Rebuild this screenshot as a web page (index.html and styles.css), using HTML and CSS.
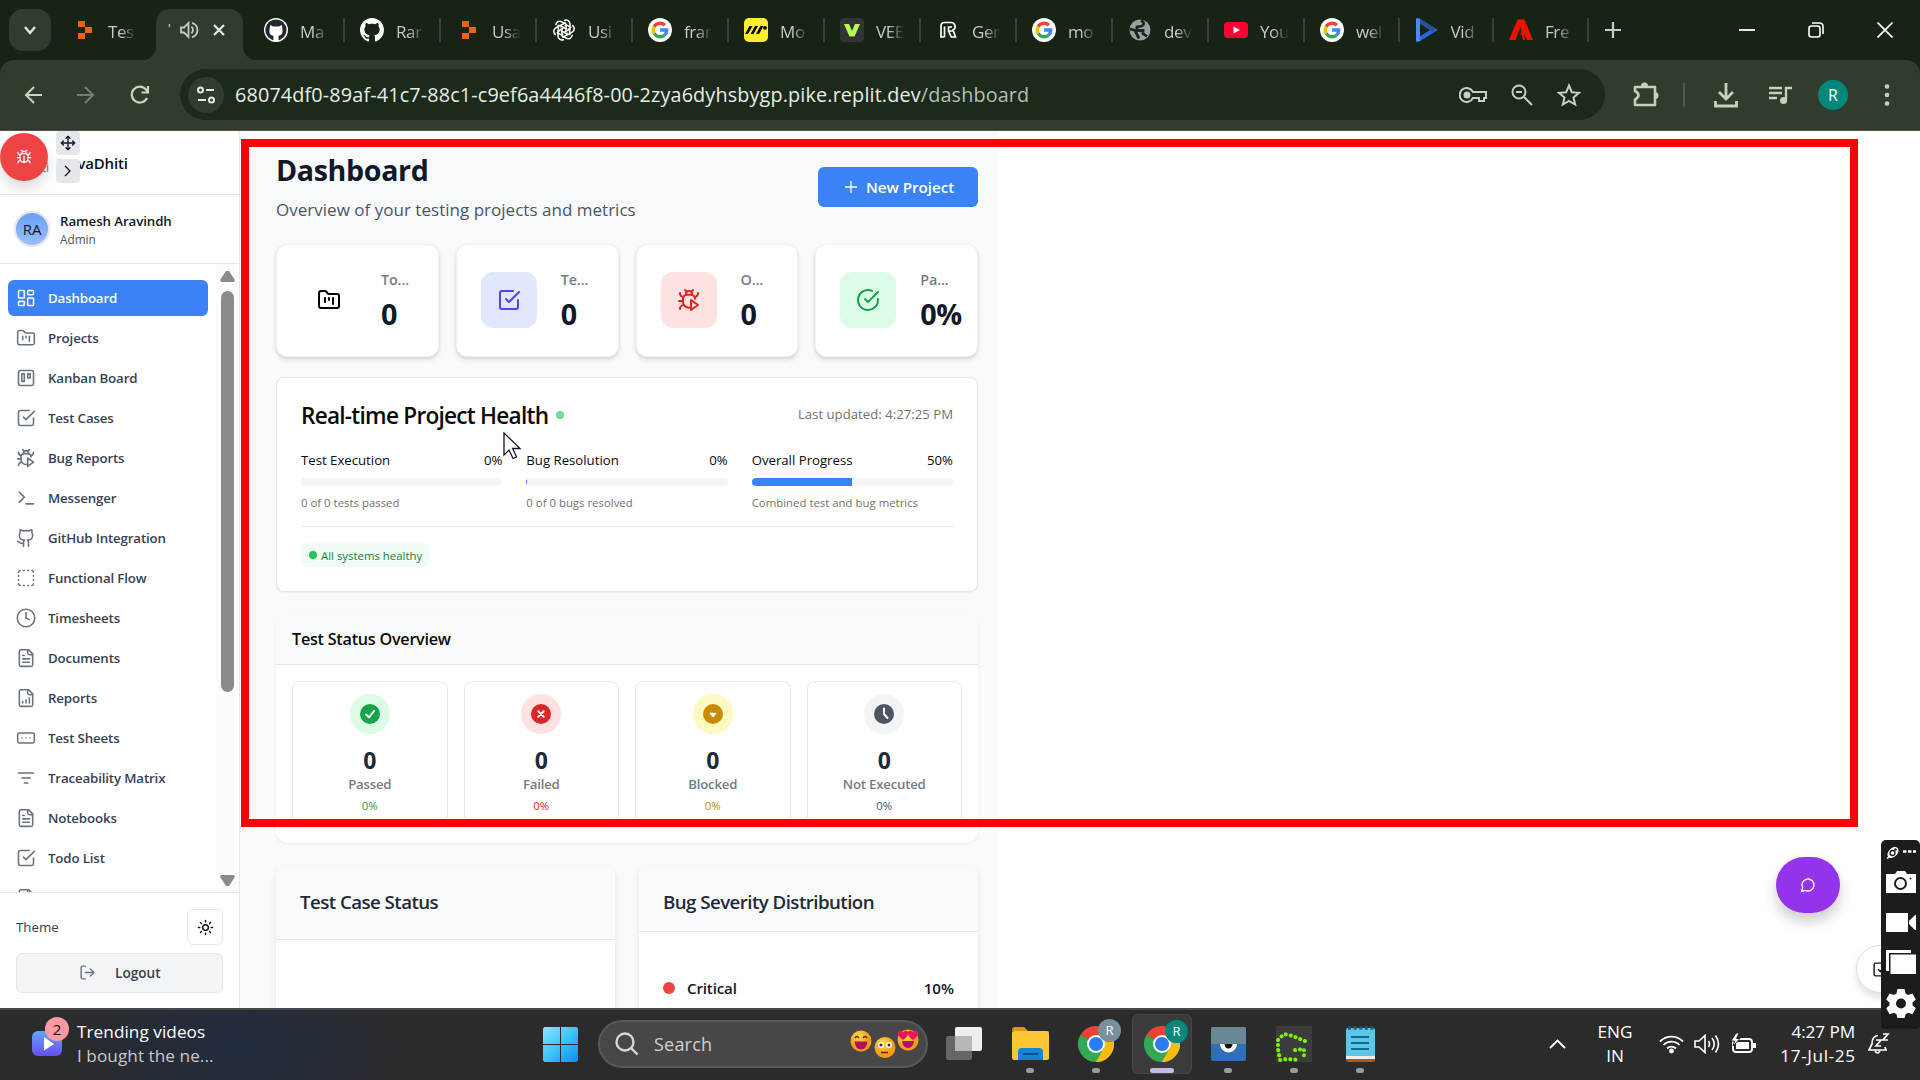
FILE: index.html
```html
<!DOCTYPE html>
<html lang="en">
<head>
<meta charset="utf-8">
<title>Dashboard</title>
<link rel="stylesheet" href="styles.css">
</head>
<body>
<svg class="defs" width="0" height="0">
  <symbol id="replit" viewBox="0 0 24 24"><path fill="#f26207" d="M6 3h7v6H6zM13 9h7v6h-7zM6 15h7v6H6z"/></symbol>
  <symbol id="google" viewBox="0 0 24 24"><circle cx="12" cy="12" r="12" fill="#fff"/><g fill="none" stroke-width="3.3"><path stroke="#ea4335" d="M6.2 8.6A6.8 6.8 0 0 1 16.8 7.2"/><path stroke="#fbbc05" d="M6.2 15.4a6.8 6.8 0 0 1 0-6.8"/><path stroke="#34a853" d="M16.4 17.2A6.8 6.8 0 0 1 6.2 15.4"/><path stroke="#4285f4" d="M12 12h6.8a6.8 6.8 0 0 1-2.4 5.2"/></g></symbol>
  <symbol id="github" viewBox="0 0 16 16"><path d="M8 0C3.58 0 0 3.58 0 8c0 3.54 2.29 6.53 5.47 7.59.4.07.55-.17.55-.38 0-.19-.01-.82-.01-1.49-2.01.37-2.53-.49-2.69-.94-.09-.23-.48-.94-.82-1.13-.28-.15-.68-.52-.01-.53.63-.01 1.08.58 1.23.82.72 1.21 1.87.87 2.33.66.07-.52.28-.87.51-1.07-1.78-.2-3.64-.89-3.64-3.95 0-.87.31-1.59.82-2.15-.08-.2-.36-1.02.08-2.12 0 0 .67-.21 2.2.82.64-.18 1.32-.27 2-.27s1.36.09 2 .27c1.53-1.04 2.2-.82 2.2-.82.44 1.1.16 1.92.08 2.12.51.56.82 1.27.82 2.15 0 3.07-1.87 3.75-3.65 3.95.29.25.54.73.54 1.48 0 1.07-.01 1.93-.01 2.2 0 .21.15.46.55.38A8.01 8.01 0 0 0 16 8c0-4.42-3.58-8-8-8z"/></symbol>
  <symbol id="folder" viewBox="0 0 24 24"><path d="M4 20h16a2 2 0 0 0 2-2V8a2 2 0 0 0-2-2h-7.93a2 2 0 0 1-1.66-.9l-.82-1.2A2 2 0 0 0 7.93 3H4a2 2 0 0 0-2 2v13c0 1.1.9 2 2 2Z"/><path d="M8 10v4M12 10v2M16 10v6"/></symbol>
  <symbol id="check-sq" viewBox="0 0 24 24"><path d="m9 11 3 3L22 4"/><path d="M21 12v7a2 2 0 0 1-2 2H5a2 2 0 0 1-2-2V5a2 2 0 0 1 2-2h11"/></symbol>
  <symbol id="bug-play" viewBox="0 0 24 24"><path d="M12.8 19.6c-.3.1-.5.1-.8.1-3.3 0-6-2.7-6-6v-3a4 4 0 0 1 4-4h4a4 4 0 0 1 4 4"/><path d="m14.1 3.9 1.9-1.9M8 2l1.9 1.9M9 7.1v-1a3 3 0 1 1 6 0v1M6.5 9C4.6 8.8 3 7.1 3 5M6 13H2M3 21c0-2.1 1.7-3.9 3.8-4M21 5c0 2.1-1.6 3.8-3.5 4"/><path d="m14 12 7 5-7 5v-10Z"/></symbol>
  <symbol id="bug" viewBox="0 0 24 24"><path d="m8 2 1.9 1.9M14.1 3.9 16 2M9 7.1v-1a3 3 0 1 1 6 0v1M12 20c-3.3 0-6-2.7-6-6v-3a4 4 0 0 1 4-4h4a4 4 0 0 1 4 4v3c0 3.3-2.7 6-6 6M12 20v-9M6.5 9C4.6 8.8 3 7.1 3 5M6 13H2M3 21c0-2.1 1.7-3.9 3.8-4M21 5c0 2.1-1.6 3.8-3.5 4M22 13h-4M17.2 17c2.1.1 3.8 1.9 3.8 4"/></symbol>
  <symbol id="doc" viewBox="0 0 24 24"><path d="M15 2H6a2 2 0 0 0-2 2v16a2 2 0 0 0 2 2h12a2 2 0 0 0 2-2V7Z"/><path d="M14 2v4a2 2 0 0 0 2 2h4M10 9H8M16 13H8M16 17H8"/></symbol>
  <symbol id="chrome" viewBox="0 0 36 36"><path fill="#ea4335" d="M18 18 2.4 9A18 18 0 0 1 33.6 9z"/><path fill="#fbbc05" d="M18 18V9h15.6A18 18 0 0 1 18 36z"/><path fill="#34a853" d="M2.4 9A18 18 0 0 0 18 36l7.8-13.5L18 18z"/><path fill="#34a853" d="M2.4 9l7.8 13.5L18 18z"/><path fill="#fbbc05" d="M18 36l7.8-13.5L26 9.500h7.8A18 18 0 0 1 18 36z"/><circle cx="18" cy="18" r="9" fill="#fff"/><circle cx="18" cy="18" r="7" fill="#2b7cf0"/></symbol>
</svg>

<header class="browser">
  <div class="tabstrip">
    <div class="tab-search"><svg width="16" height="16" viewBox="0 0 16 16"><path d="m3 5 5 6 5-6" fill="none" stroke="#dfe8dc" stroke-width="2.4"/></svg></div>
    <div class="tab first"><svg class="fav"><use href="#replit"/></svg><span>Tes</span></div>
    <div class="tab-active">
      <i>'</i>
      <svg width="19" height="18" viewBox="0 0 19 18" fill="none" stroke="#c3ccbf" stroke-width="1.8"><path d="M1 6.500h3L8.500 2v14L4 11.500H1z"/><path d="M11.500 5.500q3 3.500 0 7M12 1.800a7.500 7.500 0 0 1 0 14.400"/></svg>
      <svg class="close" width="12" height="12" viewBox="0 0 12 12"><path d="m1 1 10 10M11 1 1 11" stroke="#e6ede3" stroke-width="2.200"/></svg>
    </div>
    <div class="tab"><svg class="fav" viewBox="0 0 24 24"><circle cx="12" cy="12" r="12" fill="#fff"/><circle cx="12" cy="12" r="10.600" fill="#24292f"/><g transform="translate(-.8 0)"><path fill="#fff" d="M7 7l3 1.400h5.600l3-1.400.6 4.200c1 5-2 6.200-4 6.600l.4 5.600h-5.400V17.800C7.500 17.400 5.500 15.500 6.400 11z"/></g></svg><span>Ma</span></div>
    <div class="tab"><svg class="fav" fill="#fff"><use href="#github"/></svg><span>Rar</span></div>
    <div class="tab"><svg class="fav"><use href="#replit"/></svg><span>Usa</span></div>
    <div class="tab"><svg class="fav" viewBox="0 0 24 24" fill="none" stroke="#fff" stroke-width="1.500"><g id="pet"><path d="M12 2.500c3-1.500 6 .5 6 3.500v5l-6 3.400"/><path d="M9 9.500V7.200l4.700-2.700"/></g><use href="#pet" transform="rotate(60 12 12)"/><use href="#pet" transform="rotate(120 12 12)"/><use href="#pet" transform="rotate(180 12 12)"/><use href="#pet" transform="rotate(240 12 12)"/><use href="#pet" transform="rotate(300 12 12)"/></svg><span>Usi</span></div>
    <div class="tab"><svg class="fav"><use href="#google"/></svg><span>frar</span></div>
    <div class="tab"><svg class="fav" viewBox="0 0 24 24"><rect width="24" height="24" rx="5" fill="#ffee2e"/><path d="M1 16 5.500 8h3L4 16zM6.500 16 11 8h3l-4.500 8zM12 16l4.500-8h3L15 16z"/><circle cx="21" cy="9.800" r="1.900"/></svg><span>Mo</span></div>
    <div class="tab"><svg class="fav" viewBox="0 0 24 24"><rect width="24" height="24" rx="4" fill="#333"/><path fill="#b6ff52" d="M4 6h5l3 7 3-7h5l-5.500 12.500h-5z"/></svg><span>VEE</span></div>
    <div class="tab"><svg class="fav" viewBox="0 0 24 24" fill="none" stroke="#fff" stroke-width="1.700"><path d="M8.500 19H5V8q0-3.500 3.500-3.500H15a4 4 0 0 1 2 7.500l2.500 7h-4.200L12.500 13V9H16M8.500 8.500V19M12.500 13H17"/></svg><span>Ger</span></div>
    <div class="tab"><svg class="fav"><use href="#google"/></svg><span>mo</span></div>
    <div class="tab"><svg class="fav" viewBox="0 0 24 24"><circle cx="12" cy="12" r="10.500" fill="#9aa0a6"/><path fill="none" stroke="#1a2719" stroke-width="2.800" d="M13 2.500q5 3 1 5.500l-5 1v3.500h6v3l4 3M2 11l5 1.500 4 8"/></svg><span>dev</span></div>
    <div class="tab"><svg class="fav" viewBox="0 0 24 24"><rect y="4" width="24" height="16" rx="4" fill="#ff0033"/><path fill="#fff" d="m9.500 8.500 6.500 3.500-6.500 3.500z"/></svg><span>You</span></div>
    <div class="tab t94"><svg class="fav"><use href="#google"/></svg><span>wel</span></div>
    <div class="tab t94"><svg class="fav" viewBox="0 0 24 24"><path d="m3 2 16 10L3 22z" fill="none" stroke="#2467e8" stroke-width="4"/><path d="m3 2 16 10" stroke="#2c5292" stroke-width="4"/><path d="M3 1v22" stroke="#4b8bff" stroke-width="4"/></svg><span>Vid</span></div>
    <div class="tab t94"><svg class="fav" viewBox="0 0 24 24"><path fill="#eb1000" d="M8.500 1.500h7L24 22h-6.200l-2.200-5.500h-4.300L14 9.800 16 22h-2L11.500 9 6.500 22H0z"/></svg><span>Fre</span></div>
    <svg class="newtab" width="18" height="18" viewBox="0 0 18 18"><path d="M9 1v16M1 9h16" stroke="#c3d1bd" stroke-width="2.200"/></svg>
    <div class="win">
      <svg width="16" height="16" viewBox="0 0 16 16"><path d="M0 8h16" stroke="#fff" stroke-width="1.800"/></svg>
      <svg width="16" height="16" viewBox="0 0 16 16" fill="none" stroke="#fff" stroke-width="1.600"><rect x="1" y="4" width="11" height="11" rx="2.500"/><path d="M4 1h7.500Q15 1 15 4.500V12"/></svg>
      <svg width="16" height="16" viewBox="0 0 16 16"><path d="m.5.5 15 15M15.500.5l-15 15" stroke="#fff" stroke-width="1.700"/></svg>
    </div>
  </div>
  <div class="toolbar">
    <div class="nav">
      <svg width="18" height="18" viewBox="0 0 18 18"><path d="M18 9H2M10 1 2 9l8 8" fill="none" stroke="#c3d9ba" stroke-width="2"/></svg>
      <svg width="18" height="18" viewBox="0 0 18 18"><path d="M0 9h16M8 1l8 8-8 8" fill="none" stroke="#74806f" stroke-width="2"/></svg>
      <svg width="20" height="20" viewBox="0 0 20 20"><path d="M17 13a8 8 0 1 1-1-8.500l2 2.500M18 1v6.500h-6.500" fill="none" stroke="#c3d9ba" stroke-width="2.200"/></svg>
    </div>
    <div class="omnibox">
      <div class="site"><svg width="18" height="18" viewBox="0 0 18 18" fill="none" stroke="#e3eadf" stroke-width="2"><circle cx="3.500" cy="4" r="2.500"/><path d="M9 4h8M1 14h8"/><circle cx="14.500" cy="14" r="2.500"/></svg></div>
      <div class="url">68074df0-89af-41c7-88c1-c9ef6a4446f8-00-2zya6dyhsbygp.pike.replit.dev<span>/dashboard</span></div>
      <div class="omni-actions">
        <svg width="28" height="18" viewBox="0 0 28 18" fill="none" stroke="#c8cdc5" stroke-width="2"><path d="M14 6a7 7 0 1 0 0 6h6v3h5v-3h2V6z"/><circle cx="8" cy="9" r="2.500" fill="#c8cdc5"/></svg>
        <svg width="22" height="22" viewBox="0 0 22 22" fill="none" stroke="#c8cdc5" stroke-width="2"><circle cx="8" cy="8" r="6.500"/><path d="m13 13 8 8M5 8h6"/></svg>
        <svg width="24" height="24" viewBox="0 0 24 24" fill="none" stroke="#c8cdc5" stroke-width="2"><path d="m12 2.500 2.800 6.700 7.200.6-5.500 4.700 1.700 7-6.200-3.700-6.200 3.700 1.700-7L2 9.800l7.200-.6z"/></svg>
      </div>
    </div>
    <div class="tools">
      <svg width="26" height="26" viewBox="0 0 26 26"><path d="M2 5h20v18H2v-5.500q7-4.500 0-8.500z" fill="none" stroke="#c1d3b8" stroke-width="2.600" stroke-linejoin="round"/><path fill="#c1d3b8" d="M8 4a3.500 3.500 0 0 1 7 0zM22 10a3.500 3.500 0 0 1 0 7z"/></svg>
      <i class="bar"></i>
      <svg width="24" height="26" viewBox="0 0 24 26" fill="none" stroke="#c1d3b8" stroke-width="2.800"><path d="M12 1v16M5 10l7 7 7-7M1.500 19v5h21v-5"/></svg>
      <svg width="24" height="20" viewBox="0 0 24 20"><path d="M1 3h13M1 8h13M1 13h8M18 15V3h6" fill="none" stroke="#c1d3b8" stroke-width="2.300"/><circle cx="15.500" cy="15.500" r="3.500" fill="#c1d3b8"/></svg>
      <div class="avatar">R</div>
      <svg width="6" height="22" viewBox="0 0 6 22" fill="#c1d3b8"><circle cx="3" cy="2.500" r="2.300"/><circle cx="3" cy="11" r="2.300"/><circle cx="3" cy="19.500" r="2.300"/></svg>
    </div>
  </div>
</header>

<main class="page">
  <aside class="sidebar">
    <div class="brand"><small>Dhiti</small><b>NovaDhiti</b></div>
    <div class="user"><div class="user-av">RA</div><div class="user-info"><b>Ramesh Aravindh</b><span>Admin</span></div></div>
    <div class="nav-wrap">
      <nav class="menu">
        <a class="on"><svg class="lu" viewBox="0 0 24 24"><rect x="3" y="3" width="7" height="9" rx="1"/><rect x="14" y="3" width="7" height="5" rx="1"/><rect x="14" y="12" width="7" height="9" rx="1"/><rect x="3" y="16" width="7" height="5" rx="1"/></svg>Dashboard</a>
        <a><svg class="lu"><use href="#folder"/></svg>Projects</a>
        <a><svg class="lu" viewBox="0 0 24 24"><rect x="3" y="3" width="18" height="18" rx="2"/><path d="M7 7h3v9H7zM14 7h3v5h-3z"/></svg>Kanban Board</a>
        <a><svg class="lu"><use href="#check-sq"/></svg>Test Cases</a>
        <a><svg class="lu"><use href="#bug-play"/></svg>Bug Reports</a>
        <a><svg class="lu" viewBox="0 0 24 24"><path d="m4 17 6-6-6-6M12 19h9"/></svg>Messenger</a>
        <a><svg class="lu" viewBox="0 0 24 24"><path d="M15 22v-4a4.800 4.800 0 0 0-1-3.500c3 0 6-2 6-5.500.08-1.250-.27-2.480-1-3.500.28-1.150.28-2.350 0-3.500 0 0-1 0-3 1.500-2.640-.5-5.360-.5-8 0C6 2 5 2 5 2c-.3 1.150-.3 2.350 0 3.500A5.403 5.403 0 0 0 4 9c0 3.500 3 5.500 6 5.500-.39.490-.68 1.050-.85 1.650-.17.600-.22 1.230-.15 1.850v4"/><path d="M9 18c-4.510 2-5-2-7-2"/></svg>GitHub Integration</a>
        <a><svg class="lu" viewBox="0 0 24 24"><path d="M5 3a2 2 0 0 0-2 2M19 3a2 2 0 0 1 2 2M21 19a2 2 0 0 1-2 2M5 21a2 2 0 0 1-2-2M9 3h1M9 21h1M14 3h1M14 21h1M3 9v1M21 9v1M3 14v1M21 14v1"/></svg>Functional Flow</a>
        <a><svg class="lu" viewBox="0 0 24 24"><circle cx="12" cy="12" r="10.500"/><path d="M12 5.500V12l4 2"/></svg>Timesheets</a>
        <a><svg class="lu"><use href="#doc"/></svg>Documents</a>
        <a><svg class="lu" viewBox="0 0 24 24"><path d="M15 2H6a2 2 0 0 0-2 2v16a2 2 0 0 0 2 2h12a2 2 0 0 0 2-2V7Z"/><path d="M14 2v4a2 2 0 0 0 2 2h4M8 18v-2M12 18v-4M16 18v-6"/></svg>Reports</a>
        <a><svg class="lu" viewBox="0 0 24 24"><rect x="2" y="6" width="20" height="12" rx="2"/><path d="M7 12h.01M12 12h.01M17 12h.01"/></svg>Test Sheets</a>
        <a><svg class="lu" viewBox="0 0 24 24"><path d="M3 6h18M7 12h10M10 18h4"/></svg>Traceability Matrix</a>
        <a><svg class="lu"><use href="#doc"/></svg>Notebooks</a>
        <a><svg class="lu"><use href="#check-sq"/></svg>Todo List</a>
        <a><svg class="lu"><use href="#doc"/></svg></a>
      </nav>
      <div class="scroll"><i class="up"></i><i class="thumb"></i><i class="down"></i></div>
    </div>
    <div class="side-foot">
      <div class="theme"><span>Theme</span><div class="sun"><svg class="lu" viewBox="0 0 24 24"><circle cx="12" cy="12" r="4"/><path d="M12 2v2M12 20v2M4.900 4.900l1.400 1.400M17.700 17.700l1.400 1.400M2 12h2M20 12h2M6.300 17.700l-1.400 1.400M19.100 4.900l-1.400 1.400"/></svg></div></div>
      <div class="logout"><svg class="lu" viewBox="0 0 24 24"><path d="M9 21H5a2 2 0 0 1-2-2V5a2 2 0 0 1 2-2h4M16 17l5-5-5-5M21 12H9"/></svg>Logout</div>
    </div>
  </aside>

  <section class="content">
    <div class="head">
      <div><h1>Dashboard</h1><p>Overview of your testing projects and metrics</p></div>
      <div class="new"><svg width="12" height="12" viewBox="0 0 12 12"><path d="M6 0v12M0 6h12" stroke="#fff" stroke-width="1.300"/></svg>New Project</div>
    </div>
    <div class="stats">
      <div class="stat"><div class="tile"><svg class="lu"><use href="#folder"/></svg></div><div><span>To...</span><b>0</b></div></div>
      <div class="stat"><div class="tile indigo"><svg class="lu"><use href="#check-sq"/></svg></div><div><span>Te...</span><b>0</b></div></div>
      <div class="stat"><div class="tile red"><svg class="lu"><use href="#bug-play"/></svg></div><div><span>O...</span><b>0</b></div></div>
      <div class="stat"><div class="tile green"><svg class="lu" viewBox="0 0 24 24"><path d="M22 11.080V12a10 10 0 1 1-5.930-9.140"/><path d="m9 11 3 3L22 4"/></svg></div><div><span>Pa...</span><b>0%</b></div></div>
    </div>
    <div class="health">
      <div class="health-head"><h2>Real-time Project Health</h2><i></i><span>Last updated: 4:27:25 PM</span></div>
      <div class="meters">
        <div><p><span>Test Execution</span><span>0%</span></p><div class="track"></div><small>0 of 0 tests passed</small></div>
        <div><p><span>Bug Resolution</span><span>0%</span></p><div class="track"><i style="width:0.5%"></i></div><small>0 of 0 bugs resolved</small></div>
        <div><p><span>Overall Progress</span><span>50%</span></p><div class="track"><i style="width:50%"></i></div><small>Combined test and bug metrics</small></div>
      </div>
      <div class="health-foot"><span class="badge"><i></i>All systems healthy</span></div>
    </div>
    <div class="overview">
      <h3>Test Status Overview</h3>
      <div class="boxes">
        <div class="box passed"><div class="ring"><svg width="20" height="20" viewBox="0 0 20 20"><circle cx="10" cy="10" r="10"/><path d="m6 10.500 3 2.800 5-6.300"/></svg></div><b>0</b><span>Passed</span><small>0%</small></div>
        <div class="box failed"><div class="ring"><svg width="20" height="20" viewBox="0 0 20 20"><circle cx="10" cy="10" r="10"/><path d="m7.300 7.300 5.400 5.400M12.700 7.300l-5.400 5.400"/></svg></div><b>0</b><span>Failed</span><small>0%</small></div>
        <div class="box blocked"><div class="ring"><svg width="20" height="20" viewBox="0 0 20 20"><circle cx="10" cy="10" r="10"/><path d="M7.500 9.500h5L10 12.500z"/></svg></div><b>0</b><span>Blocked</span><small>0%</small></div>
        <div class="box idle"><div class="ring"><svg width="20" height="20" viewBox="0 0 20 20"><circle cx="10" cy="10" r="10"/><path d="M10 4.500V10l3.500 4"/></svg></div><b>0</b><span>Not Executed</span><small>0%</small></div>
      </div>
    </div>
    <div class="charts">
      <div class="chart tall"><h3>Test Case Status</h3></div>
      <div class="chart"><h3>Bug Severity Distribution</h3><div class="sev"><i></i><span>Critical</span><b>10%</b></div></div>
    </div>
  </section>
</main>

<footer class="taskbar">
  <div class="widget">
    <div class="widget-ic"><svg width="30" height="26" viewBox="0 0 30 26"><defs><linearGradient id="wg" x2="0" y2="1"><stop stop-color="#62a5ff"/><stop offset="1" stop-color="#6a4cf0"/></linearGradient></defs><rect width="30" height="25" rx="6" fill="url(#wg)"/><path fill="#fff" d="m12 6 10 7-10 6.500z"/></svg><em>2</em></div>
    <div class="widget-tx"><span>Trending videos</span><span>I bought the ne...</span></div>
  </div>
  <div class="apps">
    <svg class="start" width="35" height="35" viewBox="0 0 35 35"><defs><linearGradient id="ws" x2="1" y2="1"><stop stop-color="#8be4ff"/><stop offset=".5" stop-color="#3cc4fb"/><stop offset="1" stop-color="#0a8df5"/></linearGradient></defs><path fill="url(#ws)" d="M1.500 0H17v17H0V1.500zM18 0h15.500L35 1.500V17H18zM0 18h17v17H1.500L0 33.500zM18 18h17v15.500L33.500 35H18z"/></svg>
    <div class="search">
      <svg width="24" height="24" viewBox="0 0 24 24" fill="none" stroke="#d8d8d8" stroke-width="2.400"><circle cx="10" cy="10" r="8.500"/><path d="m16 16 6.500 6.500"/></svg><span>Search</span>
      <svg class="emo" width="70" height="32" viewBox="0 0 70 32"><defs><radialGradient id="em" cx=".4" cy=".3"><stop stop-color="#ffe04a"/><stop offset="1" stop-color="#f59a1b"/></radialGradient></defs><g fill="url(#em)"><circle cx="11" cy="13" r="10.500"/><circle cx="35" cy="19.500" r="10.500"/><circle cx="58" cy="12" r="10.500"/></g><g fill="none" stroke="#5b2d0a" stroke-width="1.700"><path d="M5 10q2-3 4 0M13 10q2-3 4 0M31 24.500h7"/></g><path fill="#b0105f" d="M4.500 13.500h13q-1 8-6.500 8t-6.500-8zM52 13h12q-1 7-6 7t-6-7z"/><g fill="#fff"><circle cx="31" cy="17" r="3"/><circle cx="39" cy="17" r="3"/></g><g fill="#333"><circle cx="31" cy="17" r="1.500"/><circle cx="39" cy="17" r="1.500"/></g><path fill="#e8175d" d="M53 12q-6-4-5-8 2-3 5 0 3-3 5 0 1 4-5 8zM63 12q-6-4-5-8 2-3 5 0 3-3 5 0 1 4-5 8z"/></svg>
    </div>
    <div class="app"><svg width="36" height="34" viewBox="0 0 36 34"><rect x="0" y="9" width="26" height="24" rx="2" fill="#666"/><rect x="9" y="0" width="27" height="24" rx="2" fill="#eee"/><path fill="#b7b7b7" d="M9 9h17v15H9z"/></svg></div>
    <div class="app run"><svg width="37" height="34" viewBox="0 0 37 34"><path fill="#d99a0b" d="M0 3q0-3 3-3h9l4 4H0z"/><rect y="4" width="37" height="29" rx="2" fill="#fdc833"/><path fill="#1783d4" d="M6 33v-8q0-4 4-4h17q4 0 4 4v8z"/><path stroke="#0a4f90" stroke-width="2" d="M11 27h15"/></svg></div>
    <div class="app run"><svg width="36" height="36"><use href="#chrome"/></svg><em class="grey">R</em></div>
    <div class="app run current"><svg width="36" height="36"><use href="#chrome"/></svg><em>R</em></div>
    <div class="app run"><svg width="35" height="34" viewBox="0 0 35 34"><rect width="35" height="34" rx="2" fill="#2f6fb5"/><path fill="#6a8796" d="M0 2q0-2 2-2h31q2 0 2 2v15H0z"/><path fill="#fff" d="M9 17h17a8.500 8.500 0 0 1-17 0z"/><path fill="#111" d="M13.500 17h8a4 4.500 0 0 1-8 0z"/></svg></div>
    <div class="app run"><svg width="36" height="36" viewBox="0 0 36 36"><path fill="#3c3c3c" d="M0 0h36v36H0z"/><path fill="none" stroke="#7cf600" stroke-width="4" stroke-linecap="round" stroke-dasharray=".1 5" d="M29 15 17 10 8 8 2 14v9l2 11 8-1 12 1M19 24l9-1v10"/></svg></div>
    <div class="app run"><svg width="29" height="36" viewBox="0 0 29 36"><rect y="2" width="29" height="32" rx="2" fill="#5cc8e8"/><path fill="#b85714" d="M0 32h29v2q0 2-2 2H2q-2 0-2-2z"/><path fill="#eee" d="M0 30h29v3H0z"/><path stroke="#0f6a8e" stroke-width="2.200" d="M5 11h18M5 17h18M5 23h18"/><path stroke="#155f86" stroke-width="3.600" stroke-dasharray="3 2.600" d="M2 2h26"/></svg></div>
  </div>
  <div class="tray">
    <svg class="chev" width="17" height="10" viewBox="0 0 17 10"><path d="m1 9 7.500-7.500L16 9" fill="none" stroke="#fff" stroke-width="1.800"/></svg>
    <div class="lang"><span>ENG</span><span>IN</span></div>
    <svg width="25" height="20" viewBox="0 0 25 20" fill="none" stroke="#fff" stroke-width="1.800"><path d="M1 7.500a16 16 0 0 1 23 0M4.500 11a11 11 0 0 1 16 0M8 14.500a6.500 6.500 0 0 1 9 0"/><circle cx="12.500" cy="17" r="1.500" fill="#fff"/></svg>
    <svg width="26" height="20" viewBox="0 0 26 20" fill="none" stroke="#fff" stroke-width="1.600"><path d="M1 7h4l6-5.500v17L5 13H1zM14.500 7q2 3 0 6M18 4q4.500 6 0 12M21.500 1.500q6 8.500 0 17"/></svg>
    <svg width="26" height="22" viewBox="0 0 26 22"><rect x="3" y="6" width="19" height="13" rx="3" fill="none" stroke="#fff" stroke-width="1.800"/><path fill="#fff" d="M6 9h13v7H6zM23 10h3v5h-3z"/><path fill="#fff" stroke="#2b2b2b" d="M6 0 1 8h3.500L3 13l7-7.500H6.500L9 0z"/></svg>
    <div class="clock"><span>4:27 PM</span><span class="date">17-Jul-25</span></div>
    <svg class="bell" width="22" height="24" viewBox="0 0 22 24"><path d="M10 3.500C5 4 4 8 4 12l-3 6h17l-1-3M7 19q2.500 4 5 0" fill="none" stroke="#fff" stroke-width="1.700"/><path d="M8 8h5l-5 6h5M15 2h5l-5 6h5" fill="none" stroke="#fff" stroke-width="1.700"/></svg>
  </div>
</footer>

<div class="selection"></div>

<div class="bug-fab"><svg class="lu" width="16" height="16"><use href="#bug"/></svg></div>
<div class="fab-tools">
  <div><svg class="lu" viewBox="0 0 24 24"><path d="M12 2v20M2 12h20M9 5l3-3 3 3M9 19l3 3 3-3M5 9l-3 3 3 3M19 9l3 3-3 3"/></svg></div>
  <div><svg class="lu" viewBox="0 0 24 24"><path d="m8 19 7-7-7-7"/></svg></div>
</div>
<div class="chat-fab"><svg class="lu" viewBox="0 0 24 24"><path d="M7.900 20A9 9 0 1 0 4 16.100L2 22Z"/></svg></div>
<div class="check-fab"><svg class="lu" viewBox="0 0 24 24"><rect x="3" y="3" width="18" height="18" rx="2"/><path d="m9 12 3 3 6-6"/></svg></div>
<div class="recorder">
  <svg width="30" height="13" viewBox="0 0 30 13"><path d="m1 12.500 4-3" stroke="#fff" stroke-width="1.500"/><ellipse cx="7" cy="6.500" rx="6.500" ry="4.300" transform="rotate(-45 7 6.500)" fill="#fff"/><circle cx="6.500" cy="7" r="2.500" fill="none" stroke="#1c1c1c" stroke-width="1.300"/><circle cx="9.500" cy="3.500" r="1.200" fill="#1c1c1c"/><path d="M17 5.500h3.500M22 5.500h3.500M27 5.500h3" stroke="#fff" stroke-width="2.500"/></svg>
  <svg width="30" height="22" viewBox="0 0 30 22"><path fill="#fff" d="M0 3h9l2-3h8l2 3h9v19H0z"/><circle cx="14.500" cy="12.500" r="5.500" fill="#fff" stroke="#1c1c1c" stroke-width="2"/><circle cx="24.500" cy="7.500" r="1" fill="#1c1c1c"/></svg>
  <svg width="30" height="19" viewBox="0 0 30 19"><path fill="#fff" d="M0 0h22v19H0zM23 8l6-6h1v15h-1l-6-6z"/></svg>
  <svg width="30" height="24" viewBox="0 0 30 24"><path fill="#fff" d="M0 0h25v3H3v18H0z"/><path fill="#fff" d="M4.500 4.500H30V24H4.500z"/></svg>
  <svg width="30" height="30" viewBox="0 0 30 30"><path fill="#fff" d="M11.500 1h7l1 4.500 2.500 1.400 4.400-1.500 3.400 6-3.300 3v2.800l3.300 3-3.400 6-4.400-1.400-2.500 1.400-1 4.300h-7l-1-4.300L8 24.800l-4.400 1.400-3.400-6 3.300-3v-2.800l-3.300-3 3.400-6L8 6.900l2.500-1.400z"/><circle cx="15" cy="15.500" r="5" fill="#1c1c1c"/></svg>
</div>
<svg class="cursor" width="20" height="28" viewBox="0 0 20 28"><path d="M1 1v22l5-5 4 8.500 3.500-1.500-3.800-8.500H17z" fill="#fff" stroke="#111827" stroke-width="1.300"/></svg>
</body>
</html>
```
FILE: styles.css
```css
* { box-sizing: border-box; margin: 0; padding: 0; }
body {
  width: 1920px; height: 1080px; overflow: hidden; position: relative;
  display: grid; grid-template-rows: 131px 877px 72px;
  font-family: "Open Sans", "Noto Sans", sans-serif; background: #fff; color: #111827;
}
svg { display: block; flex: none; }
.defs { position: absolute; }
i, em { font-style: normal; }
.lu { fill: none; stroke: currentColor; stroke-width: 2; stroke-linecap: round; stroke-linejoin: round; }

/* browser frame */
.browser { background: #162415; display: grid; grid-template-rows: 60px 71px; }
.tabstrip { display: flex; align-items: center; padding-left: 9px; }
.tab-search { width: 42px; height: 42px; border-radius: 14px; background: #303d2e; display: grid; place-items: center; margin-right: 21px; }
.tab { width: 96px; display: flex; align-items: center; gap: 12px; position: relative; height: 24px; flex: none; }
.tab::after { content: ""; position: absolute; right: 15px; top: 0; width: 2px; height: 24px; background: #354333; }
.tab.first { width: 84px; }
.tab.first::after { display: none; }
.t94 { width: 94.500px; }
.fav { width: 24px; height: 24px; }
.tab span { width: 31px; overflow: hidden; font-size: 17px; line-height: 26px; color: #c1cfbb; letter-spacing: -.4px; white-space: nowrap; padding-top: 3px; -webkit-mask-image: linear-gradient(90deg, #000 40%, transparent 92%); mask-image: linear-gradient(90deg, #000 40%, transparent 92%); }
.tab-active { width: 87px; height: 51px; margin-top: 9px; margin-right: 21px; padding: 0 18px 9px 12px; border-radius: 14px 14px 0 0; background: #303d2e; display: flex; align-items: center; gap: 9px; position: relative; color: #dfe8dc; font-size: 12px; }
.tab-active i { width: 3px; margin-top: -4px; }
.tab-active .close { margin-left: 5px; }
.tab-active::before, .tab-active::after { content: ""; position: absolute; bottom: 0; width: 14px; height: 14px; }
.tab-active::before { left: -14px; background: radial-gradient(circle at 0 0, transparent 14px, #303d2e 14.5px); }
.tab-active::after { right: -14px; background: radial-gradient(circle at 100% 0, transparent 14px, #303d2e 14.5px); }
.newtab { margin-left: 0; }
.win { margin-left: auto; margin-right: 27px; display: flex; gap: 53px; }
.toolbar { background: #303d2e; border-radius: 14px 14px 0 0; border-bottom: 1px solid #4b5748; display: flex; align-items: center; padding-left: 24px; }
.nav { display: flex; align-items: center; gap: 35px; width: 156px; }
.omnibox { width: 1425px; height: 51px; border-radius: 26px; background: #1c2a1b; display: flex; align-items: center; padding: 0 24px 0 8px; margin-bottom: 1px; }
.site { width: 36px; height: 36px; border-radius: 50%; background: #303d2e; display: grid; place-items: center; margin-right: 11px; }
.url { font-size: 19.8px; color: #e6ede3; white-space: nowrap; letter-spacing: .15px; }
.url span { color: #b5beb0; }
.omni-actions { margin-left: auto; display: flex; align-items: center; gap: 24px; }
.tools { display: flex; align-items: center; margin-left: 28px; }
.tools .bar { width: 2px; height: 24px; background: #4c5a49; margin: 0 29px 0 24px; }
.tools svg + svg { margin-left: 30px; }
.avatar { width: 30px; height: 30px; border-radius: 50%; background: #00897b; color: #fff; font-size: 16px; display: grid; place-items: center; margin: 0 36px 0 26px; }

/* sidebar */
.page { display: flex; overflow: hidden; }
.sidebar { width: 240px; border-right: 1px solid #e5e7eb; display: grid; grid-template-rows: 64px 69px 628px 116px; background: #fff; }
.brand { border-bottom: 1px solid #e5e7eb; display: flex; align-items: center; padding: 0 0 0 17px; }
.brand b { font-size: 15px; font-weight: 600; letter-spacing: -.2px; color: #0b0f19; margin-left: 8px; }
.brand small { font-size: 12px; color: #777; width: 32px; text-align: right; padding-top: 10px; }
.user { border-bottom: 1px solid #e5e7eb; display: flex; align-items: center; padding-left: 14px; gap: 10px; }
.user-av { width: 36px; height: 36px; border-radius: 50%; border: 2px solid #e5e7eb; background: linear-gradient(180deg, #6a9ff5, #9abffa); display: grid; place-items: center; font-size: 15px; }
.user-info { display: grid; }
.user-info b { font-size: 13.3px; font-weight: 600; line-height: 20px; letter-spacing: -.1px; }
.user-info span { font-size: 11.8px; line-height: 17px; color: #4b5563; }
.nav-wrap { display: flex; overflow: hidden; }
.menu { flex: 1; padding: 16px 8px 0; display: flex; flex-direction: column; gap: 4px; }
.menu a { height: 36px; flex: none; border-radius: 6px; display: flex; align-items: center; gap: 12px; padding-left: 8px; font-size: 13.3px; font-weight: 600; color: #374151; letter-spacing: -.15px; }
.menu .lu { width: 20px; height: 20px; color: #6b7280; stroke-width: 1.9; }
.menu .on { background: #3b82f6; color: #fff; }
.menu .on .lu { color: #fff; }
.scroll { width: 23px; background: #fcfcfc; display: flex; flex-direction: column; align-items: center; padding-top: 7px; }
.up, .down { width: 15px; height: 11px; background: #8b8b8b; flex: none; }
.up { clip-path: polygon(40% 0, 60% 0, 100% 85%, 92% 100%, 8% 100%, 0 85%); }
.down { clip-path: polygon(8% 0, 92% 0, 100% 15%, 60% 100%, 40% 100%, 0 15%); margin-top: 183px; }
.thumb { width: 13px; height: 401px; border-radius: 7px; background: #8b8b8b; margin-top: 9px; flex: none; }
.side-foot { border-top: 1px solid #e5e7eb; padding: 16px 16px 0; }
.theme { display: flex; justify-content: space-between; align-items: center; font-size: 13.3px; color: #374151; }
.sun { width: 36px; height: 36px; border: 1px solid #e5e7eb; border-radius: 6px; display: grid; place-items: center; color: #111; }
.sun .lu { width: 17px; height: 17px; }
.logout { margin-top: 8px; height: 40px; border: 1px solid #e5e7eb; border-radius: 6px; background: #f3f4f6; display: flex; align-items: center; padding: 0 0 1px 62px; gap: 19px; font-size: 13.6px; font-weight: 600; color: #374151; }
.logout .lu { width: 17px; height: 17px; color: #6b7280; }

/* dashboard */
.content { width: 758px; background: #f9fafc; padding: 21px 20px 0 36px; display: flex; flex-direction: column; }
.head { display: flex; justify-content: space-between; align-items: center; height: 72px; flex: none; }
.head h1 { font-size: 28.6px; line-height: 36px; letter-spacing: -.35px; color: #111827; }
.head p { font-size: 17px; line-height: 28px; margin-top: 8px; color: #4b5563; letter-spacing: .02px; }
.new { width: 160px; height: 40px; margin-bottom: 2px; border-radius: 6px; background: #3b82f6; color: #fff; font-size: 15.200px; font-weight: 600; letter-spacing: -.05px; display: flex; align-items: center; gap: 9px; padding-left: 27px; }
.stats { margin-top: 20px; display: grid; grid-template-columns: repeat(4, 1fr); gap: 17px; }
.stat { height: 113px; background: #fff; border-radius: 11px; border: 1px solid #f1f2f4; box-shadow: 0 3px 5px rgba(0,0,0,.1), 0 1px 3px rgba(0,0,0,.08); display: flex; align-items: center; gap: 24px; padding: 0 0 1px 24px; }
.tile { width: 56px; height: 56px; border-radius: 12px; display: grid; place-items: center; flex: none; color: #000; }
.tile .lu { width: 24px; height: 24px; }
.indigo { background: #e0e7ff; color: #4f46e5; }
.red { background: #fee2e2; color: #dc2626; }
.green { background: #dcfce7; color: #16a34a; }
.stat span { display: block; font-size: 14.3px; line-height: 24px; font-weight: 600; letter-spacing: -.1px; color: #757b87; }
.stat b { display: block; font-size: 28.8px; line-height: 36px; margin-top: 4px; letter-spacing: -.4px; }
.health { margin-top: 20px; height: 215px; flex: none; background: #fff; border: 1px solid #e5e5e5; border-radius: 8px; box-shadow: 0 1px 2px rgba(0,0,0,.05); padding: 22px 24px 0; }
.health-head { display: flex; align-items: center; height: 32px; }
.health-head h2 { font-size: 22.6px; font-weight: 600; line-height: 32px; letter-spacing: -.75px; color: #0c0a09; }
.health-head i { width: 8px; height: 8px; border-radius: 50%; background: #6fdc95; margin: -3px 0 0 8px; }
.health-head span { margin: -4px 0 0 auto; font-size: 13.2px; color: #78716c; }
.meters { margin-top: 18px; display: grid; grid-template-columns: repeat(3, 1fr); gap: 24px; }
.meters p { display: flex; justify-content: space-between; font-size: 13.2px; line-height: 20px; color: #0c0a09; }
.track { height: 8px; border-radius: 4px; background: #f5f5f4; margin: 8px 0; overflow: hidden; }
.track i { display: block; height: 8px; background: #3b82f6; }
.meters small { display: block; font-size: 11.4px; line-height: 17px; margin-bottom: -1px; color: #78716c; }
.health-foot { margin-top: 16px; border-top: 1px solid #e5e5e5; padding-top: 16px; display: flex; }
.badge { height: 24px; width: 129px; border-radius: 6px; background: #f0fdf4; color: #15803d; font-size: 11.4px; display: flex; align-items: center; gap: 4px; padding-left: 8px; white-space: nowrap; }
.badge i { width: 8px; height: 8px; border-radius: 50%; background: #22c55e; }
.overview { margin-top: 24px; height: 227px; flex: none; border-radius: 12px; background: #fff; box-shadow: 0 1px 3px rgba(0,0,0,.07); overflow: hidden; }
.overview h3 { height: 49px; background: #f9fafc; border-bottom: 1px solid #e5e5e5; padding: 11px 16px 0; font-size: 16.200px; line-height: 24px; font-weight: 600; letter-spacing: -.25px; color: #0c0a09; }
.boxes { padding: 16px; display: grid; grid-template-columns: repeat(4, 1fr); gap: 16px; }
.box { height: 146px; border: 1px solid #e5e7eb; border-radius: 8px; display: flex; flex-direction: column; align-items: center; padding-top: 12px; }
.ring { width: 40px; height: 40px; border-radius: 50%; display: grid; place-items: center; }
.ring path { fill: none; stroke: #fff; stroke-width: 2; stroke-linecap: round; stroke-linejoin: round; }
.box b { font-size: 23px; line-height: 32px; margin: 10px 0 -2px; color: #1f2937; }
.box span { font-size: 13.2px; line-height: 20px; font-weight: 600; letter-spacing: -.2px; color: #757b87; }
.box small { font-size: 11.4px; line-height: 16px; margin-top: 4px; }
.passed .ring { background: #dcfce7; fill: #16a34a; } .passed small { color: #16a34a; }
.failed .ring { background: #fee2e2; fill: #dc2626; } .failed small { color: #dc2626; }
.blocked .ring { background: #fef9c3; fill: #ca8a04; } .blocked small { color: #ca8a04; }
.blocked .ring path { fill: #fff; stroke-width: 1.5; }
.idle .ring { background: #f3f4f6; fill: #4b5563; } .idle small { color: #4b5563; }
.charts { margin-top: 24px; height: 180px; flex: none; display: grid; grid-template-columns: 1fr 1fr; gap: 24px; }
.chart { background: #fff; border-radius: 8px; box-shadow: 0 3px 6px rgba(0,0,0,.1); overflow: hidden; }
.chart h3 { height: 65px; background: #f9fafc; border-bottom: 1px solid #e5e7eb; padding: 21px 24px 0; font-size: 18.7px; line-height: 28px; font-weight: 600; letter-spacing: -.55px; color: #1f2937; }
.tall h3 { height: 73px; }
.sev { display: flex; align-items: center; padding: 44px 24px 0 24px; font-size: 15.1px; line-height: 24px; font-weight: 600; letter-spacing: -.15px; }
.sev i { width: 12px; height: 12px; border-radius: 50%; background: #ef4444; margin-right: 12px; }
.sev b { margin-left: auto; font-weight: 600; letter-spacing: 0; }

/* taskbar */
.taskbar { background: radial-gradient(ellipse 190px 110px at 235px 36px, #212c3f, rgba(33,44,63,0)), #2b2b2b; border-top: 2px solid #4a4a4d; padding-bottom: 2px; display: flex; align-items: center; color: #fff; }
.widget { display: flex; width: 543px; padding-left: 32px; align-items: center; }
.widget-ic { position: relative; margin-right: 15px; }
.widget-ic em { position: absolute; left: 13px; top: -14px; width: 24px; height: 24px; border-radius: 50%; background: #ff99a4; color: #111; font-size: 15px; line-height: 24px; text-align: center; }
.widget-tx { display: grid; font-size: 17.2px; line-height: 24px; letter-spacing: .05px; }
.widget-tx span + span { color: #c8c8c8; }
.apps { display: flex; align-items: center; }
.start { margin-right: 20px; }
.search { width: 330px; height: 48px; border-radius: 24px; background: #474747; border: 2px solid #585858; display: flex; align-items: center; padding: 0 6px 0 15px; margin-right: 3px; }
.search span { font-size: 18px; color: #d0d0d0; margin-left: 15px; letter-spacing: .2px; }
.emo { margin-left: auto; }
.app { width: 60px; height: 60px; margin: 0 3px; border-radius: 6px; display: grid; place-items: center; position: relative; }
.run::after { content: ""; position: absolute; bottom: 1px; left: 26px; width: 8px; height: 5px; border-radius: 3px; background: #9a9a9a; }
.current { background: #3b3b3b; border: 1px solid #474747; }
.current::after { left: 17px; width: 24px; background: #c1bde4; bottom: 0; }
.app em { position: absolute; left: 32px; top: 5px; width: 23px; height: 23px; border-radius: 50%; background: #00897b; font-size: 13px; line-height: 23px; text-align: center; }
.app .grey { background: #78909c; }
.tray { margin-left: auto; display: flex; align-items: center; padding-right: 30px; gap: 10px; }
.chev { margin-right: 22px; }
.lang { text-align: center; margin-right: 17px; }
.lang, .clock { display: grid; font-size: 17.2px; line-height: 24px; letter-spacing: -.1px; }
.clock { text-align: right; margin-left: 14px; }
.date { letter-spacing: .6px; margin-right: -.6px; }
.bell { margin-left: 3px; }

/* layers above the page */
.selection { position: absolute; left: 241px; top: 139px; width: 1617px; height: 688px; border: 8px solid #f00; }
.bug-fab { position: absolute; left: 0; top: 133px; width: 48px; height: 48px; border-radius: 50%; background: #ef4444; color: #fff; display: grid; place-items: center; box-shadow: 0 8px 14px rgba(0,0,0,.14); }
.fab-tools { position: absolute; left: 56px; top: 131px; display: grid; gap: 4px; }
.fab-tools div { width: 24px; height: 24px; border-radius: 4px; background: #e5e7eb; display: grid; place-items: center; }
.fab-tools .lu { width: 16px; height: 16px; }
.chat-fab { position: absolute; left: 1776px; top: 857px; width: 64px; height: 56px; border-radius: 28px; background: #9333ea; color: #fff; display: grid; place-items: center; box-shadow: 0 8px 14px rgba(0,0,0,.2); }
.chat-fab .lu { width: 16px; height: 16px; }
.check-fab { position: absolute; left: 1856px; top: 945px; width: 48px; height: 48px; border-radius: 50%; border: 1px solid #ddd; background: #fff; display: grid; place-items: center; box-shadow: 0 5px 9px rgba(0,0,0,.12); }
.check-fab .lu { width: 17px; height: 17px; }
.recorder { position: absolute; left: 1881px; top: 840px; width: 39px; height: 189px; border-radius: 5px; background: #1c1c1c; display: flex; flex-direction: column; padding: 6px 0 0 5px; }
.recorder svg:nth-child(2) { margin-top: 12px; }
.recorder svg:nth-child(3) { margin-top: 20px; }
.recorder svg:nth-child(4) { margin-top: 18px; }
.recorder svg:nth-child(5) { margin-top: 14px; }
.cursor { position: absolute; left: 503px; top: 432px; }
```
